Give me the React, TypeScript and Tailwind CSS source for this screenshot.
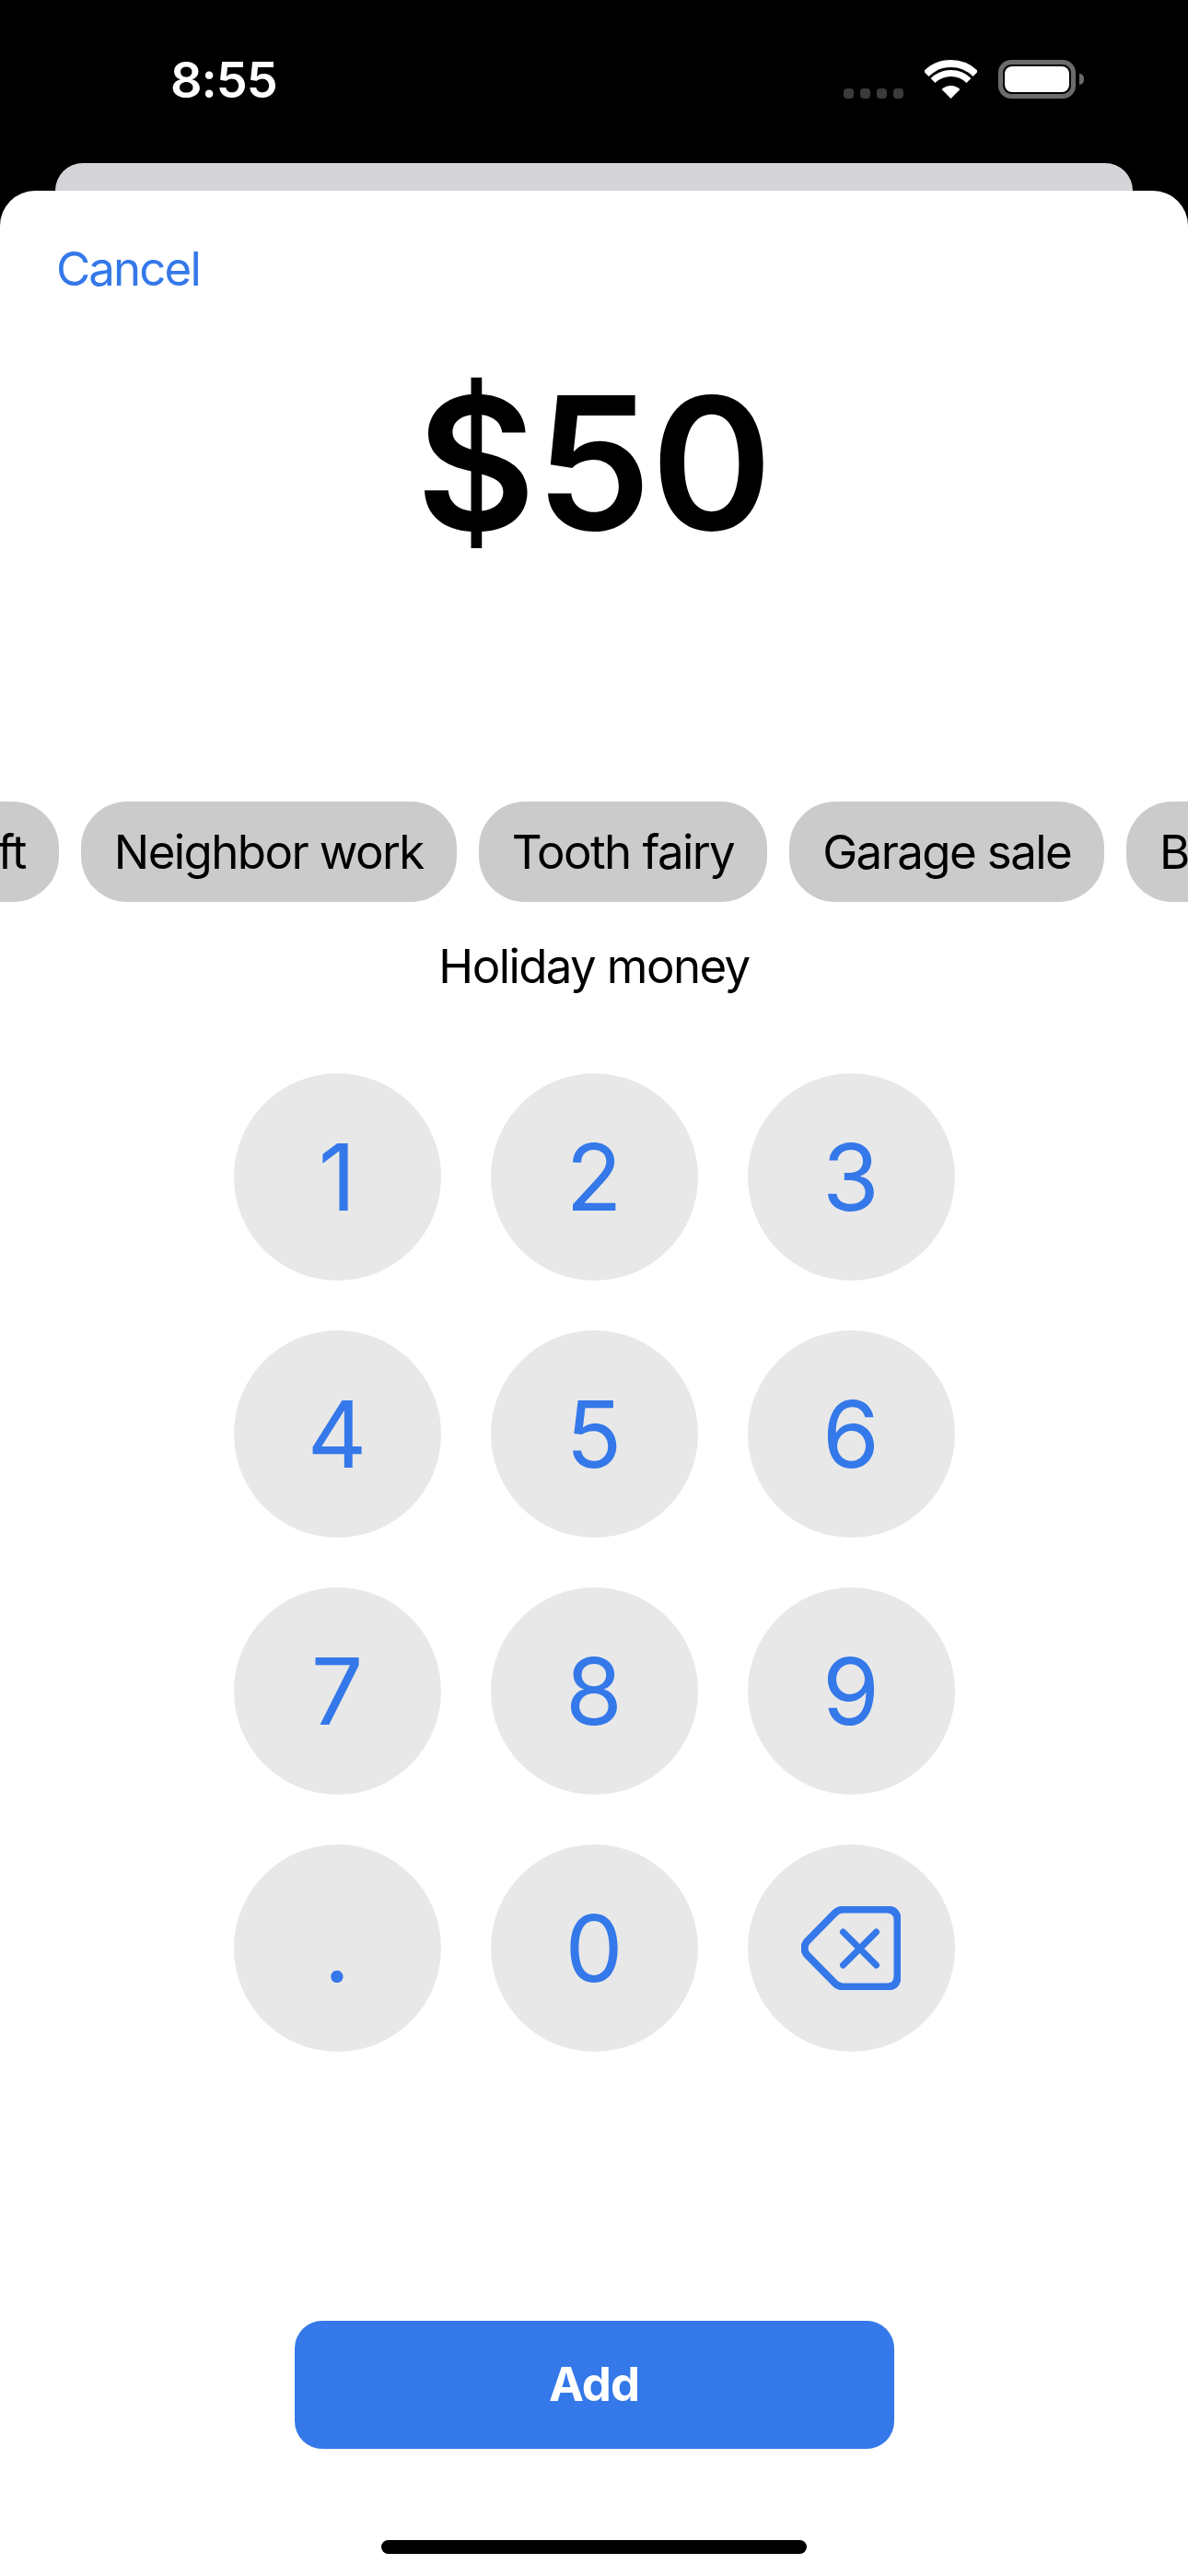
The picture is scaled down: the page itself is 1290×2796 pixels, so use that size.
import React from 'react';

const sans = 'font-["Inter","Liberation_Sans",sans-serif]';

const chips = ['Gift', 'Neighbor work', 'Tooth fairy', 'Garage sale', 'Birthday'];
const keys = ['1', '2', '3', '4', '5', '6', '7', '8', '9', '.', '0'];

const Wifi = () => (
    <svg width="57" height="42" viewBox="0 0 57 42" fill="none" stroke="white">
        <path d="M1.63 15.13A38 38 0 0 1 55.37 15.13" strokeWidth="8" />
        <path d="M9.05 22.55A27.5 27.5 0 0 1 47.95 22.55" strokeWidth="7" />
        <path d="M28.5 42L18.6 32.1A14 14 0 0 1 38.4 32.1Z" fill="white" stroke="none" />
    </svg>
);

const Backspace = () => (
    <svg width="108" height="91" viewBox="0 0 108 91" fill="none" stroke="#3478E9" strokeLinecap="round" strokeLinejoin="round">
        <path
            d="M46 3.5H93Q104.5 3.5 104.5 15V76Q104.5 87.5 93 87.5H46Q40 87.5 36 83L6 52.5Q1 45.5 6 38.5L36 8Q40 3.5 46 3.5Z"
            strokeWidth="8"
        />
        <path d="M45.5 28L81.5 64M81.5 28L45.5 64" strokeWidth="7" />
    </svg>
);

export default function App() {
    return (
        <div className={`w-[1290px] h-[2796px] bg-black flex flex-col overflow-hidden ${sans}`}>
            {/* Status bar */}
            <div className="h-[177px] flex items-start justify-between pl-[185px] pr-[113px] pt-[56px] text-white">
                <span className="text-[54px] leading-[62px] font-semibold tracking-[-1px]">8:55</span>
                <div className="flex items-end pt-[9px]">
                    <div className="flex gap-[7px] mr-[23px]">
                        <div className="w-[11px] h-[11px] rounded-[4px] bg-[#3a3a3a]" />
                        <div className="w-[11px] h-[11px] rounded-[4px] bg-[#3a3a3a]" />
                        <div className="w-[11px] h-[11px] rounded-[4px] bg-[#3a3a3a]" />
                        <div className="w-[11px] h-[11px] rounded-[4px] bg-[#3a3a3a]" />
                    </div>
                    <Wifi />
                    <div className="flex items-center ml-[23px]">
                        <div className="w-[84px] h-[42px] rounded-[14px] border-[5px] border-[#6b6b6b] p-[2px]">
                            <div className="w-full h-full rounded-[8px] bg-white" />
                        </div>
                        <div className="w-[5px] h-[12px] ml-[4px] rounded-r-full bg-[#6b6b6b]" />
                    </div>
                </div>
            </div>

            {/* Card behind the sheet */}
            <div className="h-[30px] mx-[60px] bg-[#d5d5d9] rounded-t-[30px]" />

            {/* Sheet */}
            <div className="flex-1 bg-white rounded-t-[38px] flex flex-col">
                <div className="h-[118px] pl-[61px] pt-[54px] text-[51px] leading-[62px] text-[#3478E9] tracking-[-1.9px]">Cancel</div>

                <div className="h-[545px] pt-[62px] text-center text-[200px] leading-[230px] font-semibold text-black tracking-[-0.5px]">
                    $50
                </div>

                {/* Category chips */}
                <div className="overflow-hidden">
                    <div className="flex gap-[24px] -ml-[86px] w-[1600px]">
                        {chips.map((chip) => (
                            <div
                                key={chip}
                                className="h-[109px] px-[36px] pt-[2px] rounded-[50px] bg-[#cbcbcb] flex items-center text-[51px] text-black whitespace-nowrap shrink-0 tracking-[-1.6px]"
                            >
                                {chip}
                            </div>
                        ))}
                    </div>
                </div>

                <div className="mt-[39px] text-center text-[51px] leading-[62px] text-black tracking-[-1.6px]">Holiday money</div>

                {/* Keypad */}
                <div className="mt-[85px] mx-auto grid grid-cols-3 gap-[54px] w-[783px]">
                    {keys.map((k) => (
                        <div
                            key={k}
                            className="w-[225px] h-[225px] rounded-full bg-[#e8e8e8] flex items-center justify-center text-[100px] font-normal text-[#3478E9]"
                        >
                            {k}
                        </div>
                    ))}
                    <div className="w-[225px] h-[225px] rounded-full bg-[#e8e8e8] flex items-center justify-center">
                        <Backspace />
                    </div>
                </div>

                {/* Add button */}
                <div className="mt-[292px] mx-auto w-[651px] h-[139px] rounded-[30px] bg-[#3478E9] flex items-center justify-center text-[51px] font-bold text-white tracking-[-1px]">
                    Add
                </div>

                <div className="mt-[99px] mx-auto w-[462px] h-[15px] rounded-full bg-black" />
            </div>
        </div>
    );
}
